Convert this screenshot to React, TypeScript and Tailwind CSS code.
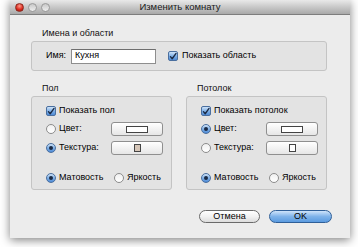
import React from "react";

const font = { fontFamily: '"Liberation Sans", Arial, sans-serif' };

function Check() {
  return (
    <div className="w-[10px] h-[10px] rounded-[2px] border border-[#4a6f9f] bg-gradient-to-b from-[#cfe3f8] via-[#7fb0e6] to-[#4f8bd6] flex items-center justify-center shrink-0">
      <svg width="9" height="9" viewBox="0 0 10 10">
        <path d="M1.8 5.2 L4 7.8 L8.8 1.2" stroke="#1b2a44" strokeWidth="1.7" fill="none" strokeLinecap="round" strokeLinejoin="round" />
      </svg>
    </div>
  );
}

function Radio({ on }: { on: boolean }) {
  return on ? (
    <div className="w-[10px] h-[10px] rounded-full border border-[#4a6f9f] bg-gradient-to-b from-[#cfe3f8] via-[#7fb0e6] to-[#4f8bd6] flex items-center justify-center shrink-0">
      <div className="w-[4px] h-[4px] rounded-full bg-[#1b2a44]" />
    </div>
  ) : (
    <div className="w-[10px] h-[10px] rounded-full border border-[#8c8c8c] bg-gradient-to-b from-[#f0f0f0] to-[#ffffff] shrink-0" />
  );
}

function Swatch({ kind, fill }: { kind: "color" | "tex"; fill: string }) {
  return (
    <div className="w-[52px] h-[14px] rounded-[3px] border border-[#8f8f8f] bg-gradient-to-b from-[#ffffff] to-[#e6e6e6] flex items-center justify-center">
      {kind === "color" ? (
        <div className="w-[22px] h-[7px] border border-[#444]" style={{ background: fill }} />
      ) : (
        <div className="w-[7px] h-[8px] border border-[#444]" style={{ background: fill }} />
      )}
    </div>
  );
}

function Group({
  title,
  show,
  colorOn,
  texFill,
}: {
  title: string;
  show: string;
  colorOn: boolean;
  texFill: string;
}) {
  return (
    <div className="flex flex-col w-[141px]">
      <div className="h-[11px] leading-[11px] pl-[11px] text-[9px] text-[#111]">{title}</div>
      <div className="mt-[2px] h-[94px] rounded-[3px] border border-[#c4c4c4] bg-[#e3e3e3] pl-[14px] pt-[9px] flex flex-col">
        <div className="flex items-center h-[10px] gap-[3px]">
          <Check />
          <span className="text-[9px] text-black">{show}</span>
        </div>
        <div className="flex items-center h-[14px] mt-[6px]">
          <div className="flex items-center gap-[3px] w-[65px]">
            <Radio on={colorOn} />
            <span className="text-[9px] text-black">Цвет:</span>
          </div>
          <Swatch kind="color" fill="#ffffff" />
        </div>
        <div className="flex items-center h-[14px] mt-[5px]">
          <div className="flex items-center gap-[3px] w-[65px]">
            <Radio on={!colorOn} />
            <span className="text-[9px] text-black">Текстура:</span>
          </div>
          <Swatch kind="tex" fill={texFill} />
        </div>
        <div className="flex items-center h-[10px] mt-[18px]">
          <div className="flex items-center gap-[3px] w-[68px]">
            <Radio on={true} />
            <span className="text-[9px] text-black">Матовость</span>
          </div>
          <div className="flex items-center gap-[3px]">
            <Radio on={false} />
            <span className="text-[9px] text-black">Яркость</span>
          </div>
        </div>
      </div>
    </div>
  );
}

export default function App() {
  return (
    <div className="w-[358px] h-[247px] bg-white overflow-hidden" style={font}>
      <div className="ml-[10px] w-[340px] h-[238px] bg-[#ececec] shadow-[0_2px_9px_rgba(0,0,0,0.5)] flex flex-col">
        <div className="h-[15px] bg-gradient-to-b from-[#e9e9e9] to-[#a9a9a9] border-b border-[#7d7d7d] flex items-center relative">
          <div className="flex items-center gap-[4px] pl-[5px]">
            <div className="w-[9px] h-[9px] rounded-full bg-[radial-gradient(circle_at_50%_30%,#ff9a8a,#d8261a_60%,#9a1a10)] border border-[#8a2a20]" />
            <div className="w-[9px] h-[9px] rounded-full bg-gradient-to-b from-[#c8c8c8] to-[#eeeeee] border border-[#9a9a9a]" />
            <div className="w-[9px] h-[9px] rounded-full bg-gradient-to-b from-[#c8c8c8] to-[#eeeeee] border border-[#9a9a9a]" />
          </div>
          <div className="absolute inset-0 flex items-center justify-center text-[9.5px] text-[#1a1a1a]">Изменить комнату</div>
        </div>
        <div className="flex flex-col pl-[21px] pr-[23px] pt-[13px]">
          <div className="h-[11px] leading-[11px] pl-[11px] text-[9px] text-[#111]">Имена и области</div>
          <div className="mt-[2px] h-[30px] rounded-[3px] border border-[#c4c4c4] bg-[#e3e3e3] flex items-center pl-[14px]">
            <span className="text-[9px] text-black w-[25px]">Имя:</span>
            <div className="w-[85px] h-[15px] bg-white border border-[#8e8e8e] border-t-[#6e6e6e] flex items-center pl-[3px] text-[9px] text-black">
              Кухня
            </div>
            <div className="ml-[12px] flex items-center gap-[4px]">
              <Check />
              <span className="text-[9px] text-black">Показать область</span>
            </div>
          </div>
          <div className="mt-[12px] flex gap-[14px]">
            <Group title="Пол" show="Показать пол" colorOn={false} texFill="#d6c6b8" />
            <Group title="Потолок" show="Показать потолок" colorOn={true} texFill="#ffffff" />
          </div>
          <div className="mt-[20px] flex justify-end gap-[9px] mr-[-5px]">
            <div className="w-[61px] h-[13px] rounded-full border border-[#6a6a6a] bg-gradient-to-b from-[#ffffff] via-[#f2f2f2] to-[#dcdcdc] flex items-center justify-center text-[9px] text-black">
              Отмена
            </div>
            <div className="w-[63px] h-[13px] rounded-full border border-[#2f5f98] bg-gradient-to-b from-[#cfe4fa] via-[#7fb3ea] to-[#5b9be0] flex items-center justify-center text-[9px] text-black">
              OK
            </div>
          </div>
        </div>
      </div>
    </div>
  );
}
